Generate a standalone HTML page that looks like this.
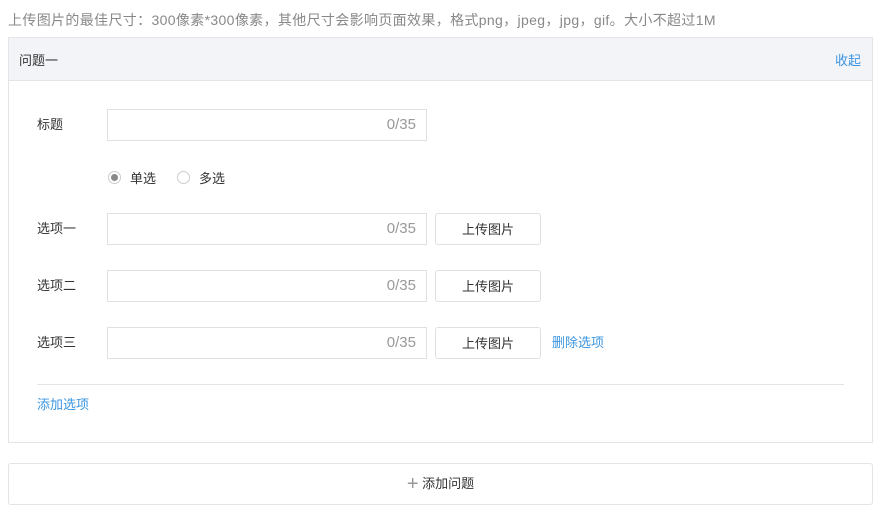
<!DOCTYPE html>
<html><head><meta charset="utf-8"><style>
*{box-sizing:border-box;margin:0;padding:0}
body{width:886px;height:525px;background:#fff;font-family:"Liberation Sans","Noto Sans CJK SC",sans-serif;font-size:13px;color:#333;position:relative;overflow:hidden}
.a{position:absolute;white-space:nowrap}
.tip{left:8px;top:10px;font-size:14px;color:#888;letter-spacing:0.35px}
.panel{left:8px;top:37px;width:865px;height:406px;border:1px solid #e4e4e4}
.hd{left:9px;top:38px;width:863px;height:43px;background:#f3f4f8;border-bottom:1px solid #e4e4e4}
.blue{color:#3d96e0}
.inp{width:320px;height:32px;border:1px solid #e0e0e0;text-align:right;padding-right:10px;line-height:30px;color:#999;font-size:15px;left:107px}
.btn{left:435px;width:106px;height:32px;border:1px solid #e0e0e0;border-radius:3px;text-align:center;line-height:32px;color:#333}
.lbl{left:37px}
.rad{width:13px;height:13px;border:1px solid #ccc;border-radius:50%}
</style></head><body>
<div class="a tip">上传图片的最佳尺寸：300像素*300像素，其他尺寸会影响页面效果，格式png，jpeg，jpg，gif。大小不超过1M</div>
<div class="a panel"></div>
<div class="a hd"></div>
<div class="a" style="left:19px;top:50px">问题一</div>
<div class="a blue" style="left:835px;top:50px">收起</div>
<div class="a lbl" style="top:114px">标题</div>
<div class="a inp" style="top:109px">0/35</div>
<div class="a rad" style="left:108px;top:171px"><div style="width:7px;height:7px;border-radius:50%;background:#888;margin:2px"></div></div>
<div class="a" style="left:130px;top:168px">单选</div>
<div class="a rad" style="left:177px;top:171px"></div>
<div class="a" style="left:199px;top:168px">多选</div>
<div class="a lbl" style="top:218px">选项一</div>
<div class="a inp" style="top:213px">0/35</div>
<div class="a btn" style="top:213px">上传图片</div>
<div class="a lbl" style="top:275px">选项二</div>
<div class="a inp" style="top:270px">0/35</div>
<div class="a btn" style="top:270px">上传图片</div>
<div class="a lbl" style="top:332px">选项三</div>
<div class="a inp" style="top:327px">0/35</div>
<div class="a btn" style="top:327px">上传图片</div>
<div class="a blue" style="left:552px;top:332px">删除选项</div>
<div class="a" style="left:37px;top:384px;width:807px;height:1px;background:#e4e4e4"></div>
<div class="a blue" style="left:37px;top:394px">添加选项</div>
<div class="a" style="left:8px;top:463px;width:865px;height:42px;border:1px solid #e4e4e4;border-radius:3px;text-align:center;line-height:40px"><span style="color:#999;font-size:20px;vertical-align:-2px">+</span> 添加问题</div>
</body></html>
